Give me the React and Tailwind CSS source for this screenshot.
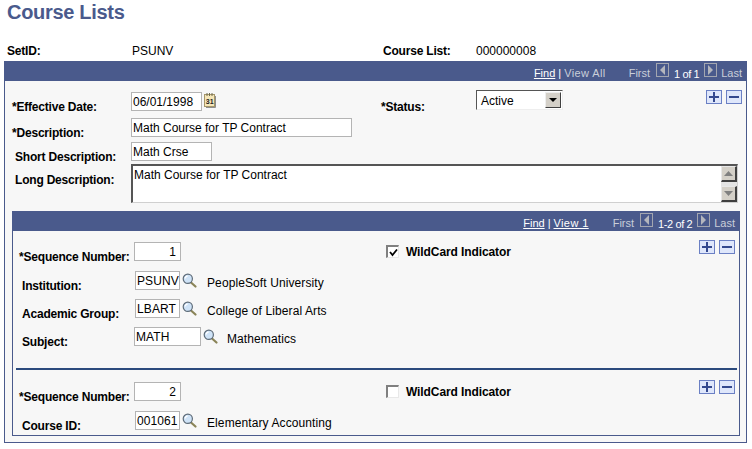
const font = "font-['Liberation_Sans',Arial,sans-serif]";

function Label({ children, wide, className = '' }) {
  return <div className={`font-bold text-[12px] leading-[14px] ${wide ? 'tracking-[-0.1px]' : 'tracking-[-0.2px]'} text-black whitespace-nowrap ${className}`}>{children}</div>;
}

function Field({ value, className = '' }) {
  return (
    <input
      readOnly
      value={value}
      className={`h-[19px] shrink-0 bg-white border border-[#b4b4b4] pl-[1px] pr-0 text-[12px] text-black outline-none ${className}`}
    />
  );
}

function SearchIcon({ className = '' }) {
  return (
    <svg width="15" height="15" viewBox="0 0 15 15" className={`shrink-0 ${className}`}>
      <path d="M9 9.5l4.5 4" stroke="#8a8458" strokeWidth="2.2" strokeLinecap="round" />
      <circle cx="5.8" cy="5.8" r="4.6" fill="#cfe3f7" stroke="#5d6b78" strokeWidth="1.2" />
      <path d="M3.2 5.5a2.6 2.6 0 0 1 2.4-2.4" stroke="#ffffff" strokeWidth="1.2" fill="none" />
    </svg>
  );
}

function CalendarIcon() {
  return (
    <svg width="13" height="15" viewBox="0 0 13 15" className="shrink-0">
      <rect x="0.5" y="1.5" width="10" height="12" fill="#f5e6b8" stroke="#a5966a" />
      <path d="M11.5 3v11.500H2" stroke="#8d8d8d" fill="none" />
      <path d="M3 0v3M5.500 0v3M8 0v3" stroke="#6e6a4e" />
      <text x="1.800" y="11" fontSize="7" fontWeight="bold" fill="#222222" fontFamily="Liberation Sans">31</text>
    </svg>
  );
}

function PlusMinus({ className = '' }) {
  return (
    <div className={`flex gap-[4px] shrink-0 ${className}`}>
      <div className="w-[16px] h-[14px] border border-[#6b80c4] bg-[#dfe7fb] flex items-center justify-center">
        <svg width="10" height="10" viewBox="0 0 10 10"><path d="M5 0v10M0 5h10" stroke="#34498f" strokeWidth="2" /></svg>
      </div>
      <div className="w-[16px] h-[14px] border border-[#6b80c4] bg-[#dfe7fb] flex items-center justify-center">
        <svg width="10" height="10" viewBox="0 0 10 10"><path d="M0 5h10" stroke="#34498f" strokeWidth="2" /></svg>
      </div>
    </div>
  );
}

function NavArrow({ dir }) {
  return (
    <div className="w-[13px] h-[14px] border border-[#a3a6b0] flex items-center justify-center">
      <svg width="7" height="10" viewBox="0 0 7 10">
        <path d={dir === 'left' ? 'M6 0v10L1 5z' : 'M1 0v10l5-5z'} fill="#b4b6bd" />
      </svg>
    </div>
  );
}

function NavBar({ viewText, viewUnderlined, count, countGap }) {
  return (
    <div className="h-[20px] bg-[#4a5a8c] flex justify-end items-start text-[11px] leading-[13px] text-[#c9ced9] whitespace-nowrap">
      <span className="mt-[6px] text-white underline">Find</span>
      <span className="mt-[6px] mx-[3px] text-white">|</span>
      <span className={viewUnderlined ? 'mt-[6px] tracking-[0.4px] text-white underline' : 'mt-[6px] tracking-[0.4px]'}>{viewText}</span>
      <span className={`mt-[6px] ${countGap}`}>First</span>
      <div className="mt-[2px] ml-[6px]"><NavArrow dir="left" /></div>
      <span className="mt-[7px] mx-[5px] tracking-[-0.4px] text-white">{count}</span>
      <div className="mt-[2px]"><NavArrow dir="right" /></div>
      <span className="mt-[6px] ml-[4px] mr-[4px]">Last</span>
    </div>
  );
}

function CheckBox({ checked }) {
  return (
    <div className="w-[13px] h-[13px] shrink-0 bg-white border-t-2 border-l-2 border-t-[#808080] border-l-[#808080] border-r border-b border-r-[#e8e8e8] border-b-[#e8e8e8] flex items-center justify-center">
      {checked && (
        <svg width="9" height="9" viewBox="0 0 9 9"><path d="M1 4l2.500 3L8 1.500" stroke="#000000" strokeWidth="1.800" fill="none" /></svg>
      )}
    </div>
  );
}

function ScrollButton({ dir }) {
  return (
    <div className="w-[16px] h-[16px] bg-[#d4d0c8] border-t border-l border-r-2 border-b-2 border-t-[#e8e8e8] border-l-[#e8e8e8] border-r-[#404040] border-b-[#404040] flex items-center justify-center">
      <svg width="9" height="5" viewBox="0 0 9 5">
        <path d={dir === 'up' ? 'M4.500 0L9 5H0z' : 'M0 0h9L4.500 5z'} fill="#808080" />
      </svg>
    </div>
  );
}

export default function App() {
  return (
    <div className={`${font} w-[752px] h-[449px] bg-white overflow-hidden`}>
      <h1 className="h-[43px] pl-[7px] pt-[1px] text-[20px] leading-[23px] tracking-[-0.3px] font-bold text-[#4a5a8c]">Course Lists</h1>

      <div className="flex h-[18px] pl-[7px] pt-[1px] text-[12px] leading-[14px]">
        <Label className="w-[125px]">SetID:</Label>
        <div className="w-[251px]">PSUNV</div>
        <Label className="w-[93px]">Course List:</Label>
        <div>000000008</div>
      </div>

      <div className="ml-[4px] w-[743px] h-[382px] border border-t-0 border-[#4a5a8c] bg-[#f7f7f7]">
        <NavBar viewText="View All" count="1 of 1" countGap="ml-[23px]" />

        <div className="flex h-[22px] mt-[9px] ml-[7px]">
          <Label className="w-[119px] mt-[10px]">*Effective Date:</Label>
          <Field value="06/01/1998" className="w-[71px] mt-[2px]" />
          <div className="ml-[2px] mt-[3px]"><CalendarIcon /></div>
          <Label className="ml-[164px] w-[95px] mt-[10px]">*Status:</Label>
          <div className="w-[87px] h-[20px] bg-white border border-t-[#555555] border-l-[#555555] border-r-[#eeeeee] border-b-[#eeeeee] flex justify-between items-center pl-[4px] pr-[1px] text-[12px]">
            <span className="mt-[2px]">Active</span>
            <div className="w-[16px] h-[16px] bg-[#d4d0c8] border border-t-[#eeeeee] border-l-[#eeeeee] border-r-[#404040] border-b-[#404040] flex items-center justify-center">
              <svg width="8" height="4" viewBox="0 0 8 4"><path d="M0 0h8L4 4z" fill="#000000" /></svg>
            </div>
          </div>
          <PlusMinus className="ml-[143px]" />
        </div>

        <div className="flex h-[19px] mt-[6px] ml-[7px]">
          <Label className="w-[119px] mt-[8px]">*Description:</Label>
          <Field value="Math Course for TP Contract" className="w-[221px]" />
        </div>

        <div className="flex h-[19px] mt-[5px] ml-[10px]">
          <Label className="w-[116px] mt-[8px]">Short Description:</Label>
          <Field value="Math Crse" className="w-[81px]" />
        </div>

        <div className="flex h-[39px] mt-[3px] ml-[10px]">
          <Label className="w-[116px] mt-[9px]">Long Description:</Label>
          <div className="w-[607px] h-[39px] bg-white border-t-2 border-l-2 border-r border-b border-t-[#555555] border-l-[#555555] border-r-[#d0d0d0] border-b-[#d0d0d0] flex justify-between">
            <div className="pl-[1px] pt-[2px] text-[12px] leading-[14px]">Math Course for TP Contract</div>
            <div className="w-[16px] flex flex-col">
              <ScrollButton dir="up" />
              <div className="flex-1 bg-[#e4e4e4]" />
              <ScrollButton dir="down" />
            </div>
          </div>
        </div>

        <div className="ml-[7px] mt-[8px] w-[728px] h-[225px] border border-[#4a5a8c] border-t-0 bg-[#f7f7f7]">
          <NavBar viewText="View 1" viewUnderlined count="1-2 of 2" countGap="ml-[24px]" />

          <div className="flex h-[22px] mt-[9px] ml-[6px]">
            <Label className="w-[115px] mt-[10px]">*Sequence Number:</Label>
            <Field value="1" className="w-[47px] mt-[2px] text-right pr-[4px]" />
            <div className="ml-[205px] mt-[5px]"><CheckBox checked /></div>
            <Label wide className="ml-[7px] w-[293px] mt-[5px]">WildCard Indicator</Label>
            <PlusMinus />
          </div>

          <div className="flex h-[19px] mt-[9px] ml-[9px] text-[12px] leading-[14px] tracking-[0.1px]">
            <Label className="w-[113px] mt-[8px]">Institution:</Label>
            <Field value="PSUNV" className="w-[45px]" />
            <SearchIcon className="ml-[2px] mt-[2px]" />
            <div className="ml-[10px] mt-[5px]">PeopleSoft University</div>
          </div>

          <div className="flex h-[19px] mt-[9px] ml-[9px] text-[12px] leading-[14px] tracking-[0.1px]">
            <Label className="w-[113px] mt-[8px]">Academic Group:</Label>
            <Field value="LBART" className="w-[45px]" />
            <SearchIcon className="ml-[2px] mt-[2px]" />
            <div className="ml-[10px] mt-[5px]">College of Liberal Arts</div>
          </div>

          <div className="flex h-[19px] mt-[9px] ml-[9px] text-[12px] leading-[14px] tracking-[0.1px]">
            <Label className="w-[112px] mt-[8px]">Subject:</Label>
            <Field value="MATH" className="w-[67px]" />
            <SearchIcon className="ml-[2px] mt-[2px]" />
            <div className="ml-[9px] mt-[5px]">Mathematics</div>
          </div>

          <div className="h-[2px] bg-[#2b4a7d] mt-[22px] ml-[3px] mr-[2px]" />

          <div className="flex h-[22px] mt-[10px] ml-[6px]">
            <Label className="w-[115px] mt-[10px]">*Sequence Number:</Label>
            <Field value="2" className="w-[47px] mt-[2px] text-right pr-[4px]" />
            <div className="ml-[205px] mt-[5px]"><CheckBox /></div>
            <Label wide className="ml-[7px] w-[293px] mt-[5px]">WildCard Indicator</Label>
            <PlusMinus />
          </div>

          <div className="flex h-[19px] mt-[9px] ml-[9px] text-[12px] leading-[14px] tracking-[0.1px]">
            <Label className="w-[113px] mt-[8px]">Course ID:</Label>
            <Field value="001061" className="w-[45px]" />
            <SearchIcon className="ml-[2px] mt-[2px]" />
            <div className="ml-[10px] mt-[5px]">Elementary Accounting</div>
          </div>
        </div>
      </div>
    </div>
  );
}
